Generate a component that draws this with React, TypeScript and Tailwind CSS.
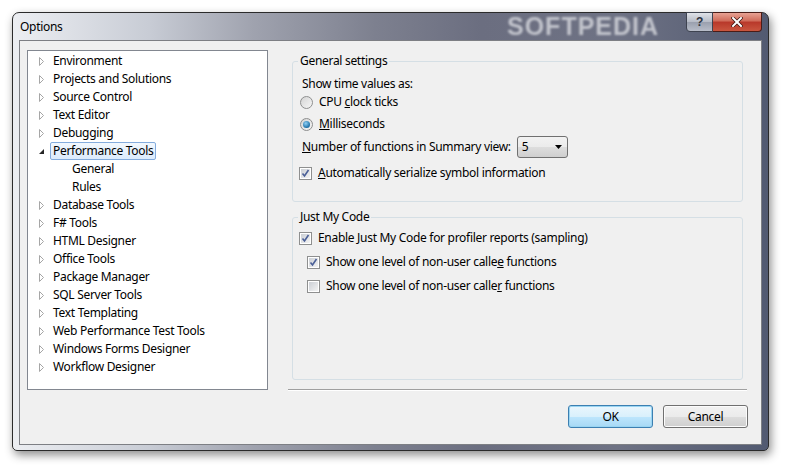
import React from "react";

const treeItems: { label: string; level?: number; expanded?: boolean; leaf?: boolean; selected?: boolean }[] = [
  { label: "Environment" },
  { label: "Projects and Solutions" },
  { label: "Source Control" },
  { label: "Text Editor" },
  { label: "Debugging" },
  { label: "Performance Tools", expanded: true, selected: true },
  { label: "General", level: 1, leaf: true },
  { label: "Rules", level: 1, leaf: true },
  { label: "Database Tools" },
  { label: "F# Tools" },
  { label: "HTML Designer" },
  { label: "Office Tools" },
  { label: "Package Manager" },
  { label: "SQL Server Tools" },
  { label: "Text Templating" },
  { label: "Web Performance Test Tools" },
  { label: "Windows Forms Designer" },
  { label: "Workflow Designer" },
];

function Arrow({ expanded }: { expanded?: boolean }) {
  if (expanded) {
    return (
      <svg width="7" height="7" viewBox="0 0 7 7" className="ml-[10px]">
        <polygon points="6,1 6,6 1,6" fill="#262626" />
      </svg>
    );
  }
  return (
    <svg width="6" height="9" viewBox="0 0 6 9" className="ml-[11px]">
      <polygon points="0.5,0.5 4.5,4.5 0.5,8.5" fill="#fff" stroke="#a6a6a6" strokeWidth="1" />
    </svg>
  );
}

function Radio({ checked }: { checked?: boolean }) {
  return (
    <span className="w-[13px] h-[13px] rounded-full border border-[#8e8f8f] bg-[linear-gradient(135deg,#d4d4d4,#f6f6f6)] flex items-center justify-center shrink-0">
      {checked && (
        <span className="w-[7px] h-[7px] rounded-full bg-[radial-gradient(circle_at_40%_35%,#8fd0f5,#1c6fa6_70%,#0d4f86)]" />
      )}
    </span>
  );
}

function Check({ checked }: { checked?: boolean }) {
  return (
    <span className="w-[13px] h-[13px] border border-[#8e8f8f] bg-white flex items-center justify-center shrink-0">
      <span className="w-[9px] h-[9px] bg-[linear-gradient(135deg,#cbcfd5,#f3f3f3)] flex items-center justify-center">
        {checked && (
          <svg width="9" height="9" viewBox="0 0 9 9">
            <path d="M1.5 4.5 L3.5 7 L7.5 1" fill="none" stroke="#4a5f97" strokeWidth="1.6" />
          </svg>
        )}
      </span>
    </span>
  );
}

export default function App() {
  return (
    <div className="w-[789px] h-[472px] bg-white pt-[12px] pl-[12px] font-['Noto_Sans',sans-serif] text-[12px] tracking-[-0.3px] text-black overflow-hidden">
      <div className="w-[757px] h-[439px] rounded-t-[7px] rounded-b-[5px] border border-[#2b2b2b] shadow-[2px_4px_10px_rgba(0,0,0,0.45)] bg-[linear-gradient(90deg,#eceef2_0%,#c8ccd5_18%,#9fa2ae_32%,#7d808f_48%,#6b6e80_62%,#6e7284_80%,#525a71_100%)] flex flex-col relative">
        {/* title bar */}
        <div className="h-[27px] flex items-center pl-[7px] relative">
          <span className="text-[12px] leading-none pt-[1px]">Options</span>
          <span className="absolute left-[494px] top-[0px] h-[26px] leading-[26px] text-[25px] font-bold font-['Liberation_Sans',sans-serif] tracking-[1px] text-[#c2c4cc] blur-[1px] select-none">
            SOFTPEDIA
          </span>
          <div className="absolute right-[6px] top-[-1px] flex">
            <div className="w-[27px] h-[20px] rounded-bl-[4px] border border-[#3e4350] bg-[linear-gradient(180deg,#dfe2e8_0%,#b6bbc6_50%,#9aa0ae_51%,#b8bdc9_100%)] flex items-center justify-center text-[#2e3340] font-bold text-[12px] font-['Liberation_Sans',sans-serif]">
              ?
            </div>
            <div className="w-[49px] h-[20px] rounded-br-[4px] border border-l-0 border-[#4a1c17] bg-[linear-gradient(180deg,#e8a294_0%,#cf6a58_45%,#b8382a_50%,#c9563f_100%)] flex items-center justify-center">
              <svg width="12" height="10" viewBox="0 0 12 10">
                <path d="M2 1 L10 9 M10 1 L2 9" stroke="#3a1410" strokeWidth="3.4" strokeLinecap="square" />
                <path d="M2 1 L10 9 M10 1 L2 9" stroke="#fff" strokeWidth="2" strokeLinecap="square" />
              </svg>
            </div>
          </div>
        </div>

        {/* client area */}
        <div className="mx-[6px] h-[405px] border border-[#7d7f84] bg-[#f0f0f0] flex pl-[7px] pt-[9px]">
          {/* tree */}
          <div className="w-[241px] h-[340px] border border-[#828790] bg-white pt-[1px]">
            {treeItems.map((it) => (
              <div key={it.label} className="h-[18px] flex items-center">
                <div className="w-[22px] flex items-center">{!it.leaf && <Arrow expanded={it.expanded} />}</div>
                <div
                  className={
                    it.selected
                      ? "h-[18px] flex items-center px-[2px] border border-[#84acdd] rounded-[2px] bg-[linear-gradient(180deg,#f2f8fe,#dcebfc)]"
                      : "h-[18px] flex items-center px-[2px] border border-transparent"
                  }
                  style={it.level ? { marginLeft: 19 } : undefined}
                >
                  <span className="leading-none">{it.label}</span>
                </div>
              </div>
            ))}
          </div>

          {/* right column */}
          <div className="ml-[20px] w-[459px] flex flex-col">
            <div className="mx-[4px] mt-[11px] h-[141px] border border-[#d5dfe5] rounded-[3px] flex flex-col">
              <div className="-mt-[9px] ml-[5px] px-[2px] h-[16px] leading-[16px] bg-[#f0f0f0] w-fit">General settings</div>
              <div className="mt-[7px] h-[16px] leading-[16px] pl-[9px]">Show time values as:</div>
              <div className="h-[20px] flex items-center pl-[7px] gap-[6px]">
                <Radio />
                <span>
                  CPU <u>c</u>lock ticks
                </span>
              </div>
              <div className="mt-[2px] h-[20px] flex items-center pl-[7px] gap-[6px]">
                <Radio checked />
                <span>
                  <u>M</u>illiseconds
                </span>
              </div>
              <div className="mt-[2px] h-[22px] flex items-center pl-[9px] gap-[6px]">
                <span>
                  <u>N</u>umber of functions in Summary view:
                </span>
                <div className="w-[51px] h-[22px] border border-[#707070] rounded-[3px] bg-[linear-gradient(180deg,#f2f2f2_0%,#ebebeb_50%,#dddddd_51%,#cfcfcf_100%)] flex items-center justify-between pl-[4px] pr-[5px]">
                  <span>5</span>
                  <svg width="7" height="4" viewBox="0 0 7 4">
                    <polygon points="0,0 7,0 3.5,4" fill="#000" />
                  </svg>
                </div>
              </div>
              <div className="mt-[5px] h-[20px] flex items-center pl-[6px] gap-[6px]">
                <Check checked />
                <span>
                  <u>A</u>utomatically serialize symbol information
                </span>
              </div>
            </div>

            <div className="mx-[4px] mt-[15px] h-[163px] border border-[#d5dfe5] rounded-[3px] flex flex-col">
              <div className="-mt-[9px] ml-[5px] px-[2px] h-[16px] leading-[16px] bg-[#f0f0f0] w-fit">Just My Code</div>
              <div className="mt-[3px] h-[20px] flex items-center pl-[6px] gap-[6px]">
                <Check checked />
                <span>
                  Enable <u>J</u>ust My Code for profiler reports (sampling)
                </span>
              </div>
              <div className="mt-[4px] h-[20px] flex items-center pl-[14px] gap-[6px]">
                <Check checked />
                <span>
                  Show one level of non-user calle<u>e</u> functions
                </span>
              </div>
              <div className="mt-[4px] h-[20px] flex items-center pl-[14px] gap-[6px]">
                <Check />
                <span>
                  Show one level of non-user calle<u>r</u> functions
                </span>
              </div>
            </div>

            <div className="mt-[9px] h-[2px] border-t border-[#a0a0a0] border-b border-b-white" />

            <div className="mt-[14px] flex justify-end gap-[10px] -mr-[1px]">
              <button className="w-[85px] h-[23px] rounded-[3px] border border-[#3c7fb1] bg-[linear-gradient(180deg,#eaf6fd_0%,#d9f0fc_50%,#bee6fd_51%,#a7d9f5_100%)] shadow-[inset_0_0_0_1px_#9ad5f2]">
                OK
              </button>
              <button className="w-[85px] h-[23px] rounded-[3px] border border-[#707070] bg-[linear-gradient(180deg,#f2f2f2_0%,#ebebeb_50%,#dddddd_51%,#cfcfcf_100%)] shadow-[inset_0_0_0_1px_#fcfcfc]">
                Cancel
              </button>
            </div>
          </div>
        </div>
      </div>
    </div>
  );
}
